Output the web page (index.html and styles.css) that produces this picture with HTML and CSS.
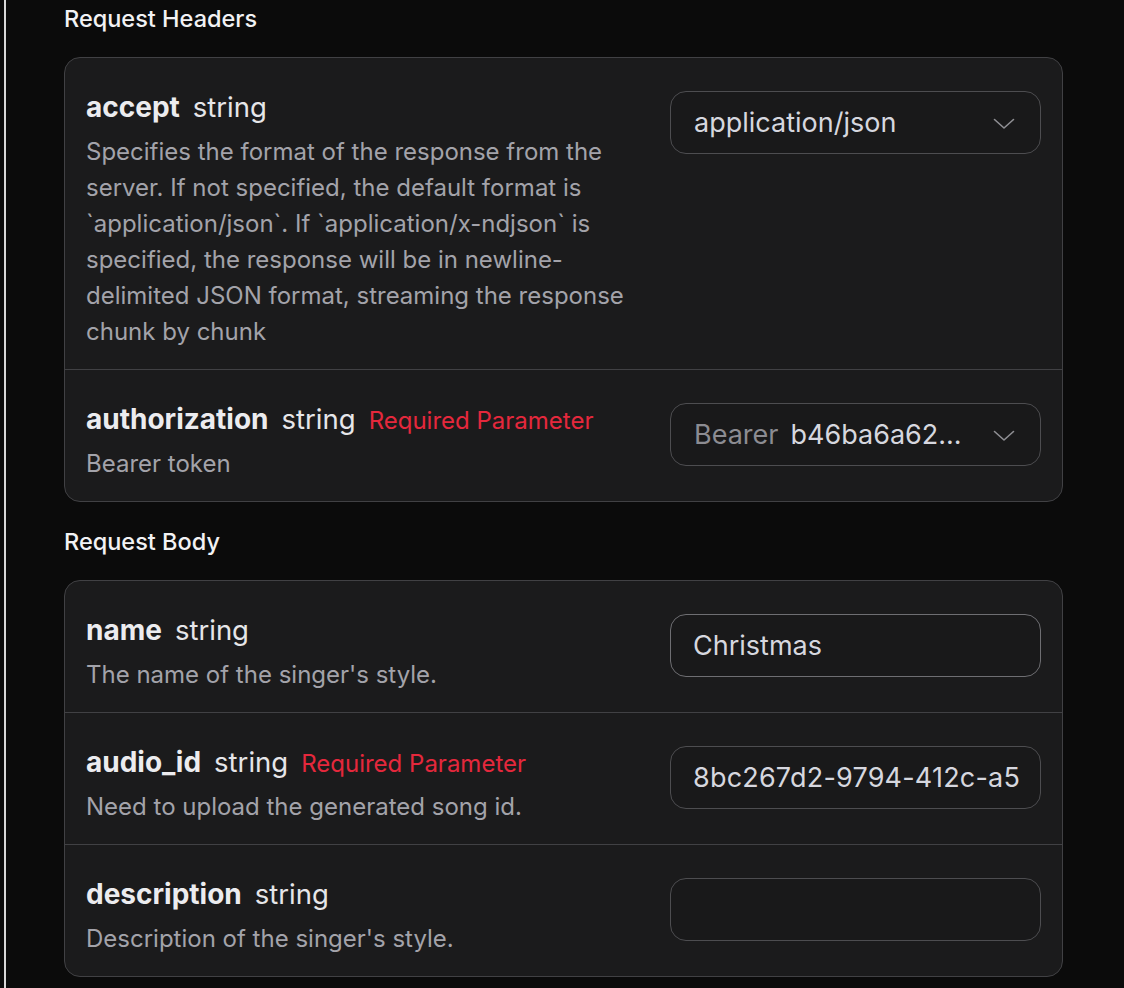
FILE: index.html
```html
<!DOCTYPE html>
<html>
<head>
<meta charset="utf-8">
<link rel="stylesheet" href="styles.css">
</head>
<body>
<div class="frame">
  <div class="edge"></div>
  <main class="content">
    <h2 class="section-title">Request Headers</h2>
    <div class="card">
      <div class="row">
        <div class="info">
          <div class="title"><span class="pname">accept</span><span class="ptype">string</span></div>
          <p class="desc">Specifies the format of the response from the server. If not specified, the default format is `application/json`. If `application/x-ndjson` is specified, the response will be in newline-delimited JSON format, streaming the response chunk by chunk</p>
        </div>
        <div class="field select">
          <span class="value">application/json</span>
          <svg class="chev" width="22" height="12" viewBox="0 0 22 12"><path d="M1.5 1.5 L11 10 L20.5 1.5" fill="none" stroke="#8e8e93" stroke-width="1.6" stroke-linecap="round" stroke-linejoin="round"/></svg>
        </div>
      </div>
      <div class="row">
        <div class="info">
          <div class="title"><span class="pname">authorization</span><span class="ptype">string</span><span class="req">Required Parameter</span></div>
          <p class="desc">Bearer token</p>
        </div>
        <div class="field select">
          <span class="value"><span class="prefix">Bearer</span>b46ba6a62...</span>
          <svg class="chev" width="22" height="12" viewBox="0 0 22 12"><path d="M1.5 1.5 L11 10 L20.5 1.5" fill="none" stroke="#8e8e93" stroke-width="1.6" stroke-linecap="round" stroke-linejoin="round"/></svg>
        </div>
      </div>
    </div>

    <h2 class="section-title body-title">Request Body</h2>
    <div class="card">
      <div class="row">
        <div class="info">
          <div class="title"><span class="pname">name</span><span class="ptype">string</span></div>
          <p class="desc">The name of the singer's style.</p>
        </div>
        <div class="field input active"><span class="value">Christmas</span></div>
      </div>
      <div class="row">
        <div class="info">
          <div class="title"><span class="pname">audio_id</span><span class="ptype">string</span><span class="req">Required Parameter</span></div>
          <p class="desc">Need to upload the generated song id.</p>
        </div>
        <div class="field input"><span class="value id">8bc267d2-9794-412c-a5</span></div>
      </div>
      <div class="row">
        <div class="info">
          <div class="title"><span class="pname">description</span><span class="ptype">string</span></div>
          <p class="desc">Description of the singer's style.</p>
        </div>
        <div class="field input"></div>
      </div>
    </div>
  </main>
</div>
</body>
</html>
```

FILE: styles.css
```css
* { box-sizing: border-box; }
html, body {
  margin: 0;
  padding: 0;
  background: #0b0b0b;
  font-family: Inter, "Noto Sans", "Liberation Sans", sans-serif;
  color: #ececef;
}
.frame {
  display: flex;
  min-height: 988px;
}
.edge {
  width: 2px;
  margin-left: 4px;
  background: #d8d8d8;
  flex: none;
}
.content {
  padding-left: 58px;
  width: 1063px;
}
.section-title {
  margin: 0;
  font-size: 23.5px;
  font-weight: 500;
  line-height: 28px;
  padding-top: 5px;
  color: #f2f2f4;
}
.body-title {
  padding-top: 0;
  margin-top: 26px;
}
.card {
  margin-top: 24px;
  background: #1b1b1c;
  border: 1.5px solid #414144;
  border-radius: 16px;
  width: 999px;
}
.row {
  display: flex;
  justify-content: space-between;
  align-items: flex-start;
  padding: 33px 21px 19px 21px;
  border-top: 1.5px solid #414144;
}
.row:first-child { border-top: none; }
.info {
  width: 560px;
}
.title {
  display: flex;
  align-items: baseline;
  height: 32px;
  line-height: 32px;
  white-space: nowrap;
}
.pname {
  font-size: 28px;
  font-weight: 700;
  color: #ececef;
  margin-right: 13px;
}
.ptype {
  font-size: 27.5px;
  font-weight: 400;
  color: #e6e6e9;
  margin-right: 13px;
}
.req {
  font-size: 24px;
  color: #e5283c;
}
.desc {
  margin: 11px 0 0 0;
  font-size: 24px;
  line-height: 36px;
  color: #a3a3aa;
}
.field {
  width: 371px;
  height: 63px;
  border: 1.5px solid #4d4d50;
  border-radius: 16px;
  background: #19191a;
  display: flex;
  align-items: center;
  padding: 0 18px 0 22px;
  overflow: hidden;
  flex: none;
}
.field.active { border-color: #6e6e72; }
.value {
  font-size: 27px;
  color: #d6d7df;
  white-space: nowrap;
  flex: 1;
}
.value.id { letter-spacing: 0.2px; }
.select .value { padding-left: 1px; }
.prefix {
  color: #8c8c92;
  margin-right: 12px;
}
.chev { flex: none; margin-right: 7px; margin-top: 2px; }
```
